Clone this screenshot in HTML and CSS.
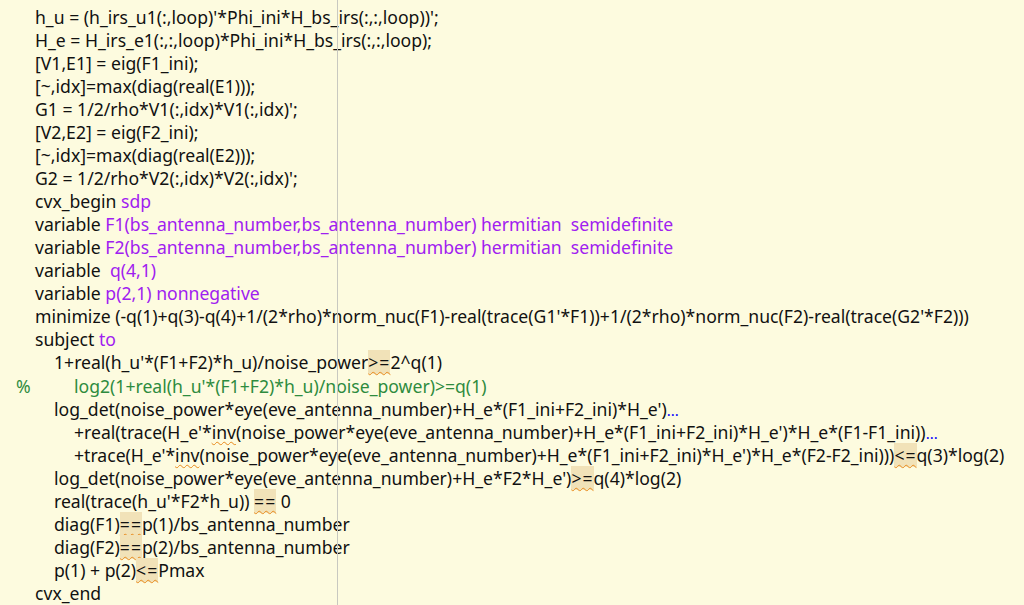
FILE: index.html
```html
<!DOCTYPE html>
<html>
<head>
<meta charset="utf-8">
<link rel="stylesheet" href="styles.css">
</head>
<body>
<div class="editor">
  <div class="margin-line"></div>
  <div class="code">
    <div class="ln">h_u = (h_irs_u1(:,loop)'*Phi_ini*H_bs_irs(:,:,loop))';</div>
    <div class="ln">H_e = H_irs_e1(:,:,loop)*Phi_ini*H_bs_irs(:,:,loop);</div>
    <div class="ln">[V1,E1] = eig(F1_ini);</div>
    <div class="ln">[~,idx]=max(diag(real(E1)));</div>
    <div class="ln">G1 = 1/2/rho*V1(:,idx)*V1(:,idx)';</div>
    <div class="ln">[V2,E2] = eig(F2_ini);</div>
    <div class="ln">[~,idx]=max(diag(real(E2)));</div>
    <div class="ln">G2 = 1/2/rho*V2(:,idx)*V2(:,idx)';</div>
    <div class="ln">cvx_begin <span class="kw">sdp</span></div>
    <div class="ln">variable <span class="kw">F1(bs_antenna_number,bs_antenna_number) hermitian  semidefinite</span></div>
    <div class="ln">variable <span class="kw">F2(bs_antenna_number,bs_antenna_number) hermitian  semidefinite</span></div>
    <div class="ln">variable <span class="kw"> q(4,1)</span></div>
    <div class="ln">variable <span class="kw">p(2,1) nonnegative</span></div>
    <div class="ln">minimize (-q(1)+q(3)-q(4)+1/(2*rho)*norm_nuc(F1)-real(trace(G1'*F1))+1/(2*rho)*norm_nuc(F2)-real(trace(G2'*F2)))</div>
    <div class="ln">subject <span class="kw">to</span></div>
    <div class="ln i1">1+real(h_u'*(F1+F2)*h_u)/noise_power<span class="hl">&gt;=</span>2^q(1)</div>
    <div class="ln cm"><span class="pct">%</span><span class="cmt">log2(1+real(h_u'*(F1+F2)*h_u)/noise_power)&gt;=q(1)</span></div>
    <div class="ln i1">log_det(noise_power*eye(eve_antenna_number)+H_e*(F1_ini+F2_ini)*H_e')<span class="dots">...</span></div>
    <div class="ln i2">+real(trace(H_e'*<span class="sq">inv</span>(noise_power*eye(eve_antenna_number)+H_e*(F1_ini+F2_ini)*H_e')*H_e*(F1-F1_ini))<span class="dots">...</span></div>
    <div class="ln i2">+trace(H_e'*<span class="sq">inv</span>(noise_power*eye(eve_antenna_number)+H_e*(F1_ini+F2_ini)*H_e')*H_e*(F2-F2_ini)))<span class="hl">&lt;=</span>q(3)*log(2)</div>
    <div class="ln i1">log_det(noise_power*eye(eve_antenna_number)+H_e*F2*H_e')<span class="hl">&gt;=</span>q(4)*log(2)</div>
    <div class="ln i1">real(trace(h_u'*F2*h_u)) <span class="hl">==</span> 0</div>
    <div class="ln i1">diag(F1)<span class="hl">==</span>p(1)/bs_antenna_number</div>
    <div class="ln i1">diag(F2)<span class="hl">==</span>p(2)/bs_antenna_number</div>
    <div class="ln i1">p(1) + p(2)<span class="hl">&lt;=</span>Pmax</div>
    <div class="ln">cvx_end</div>
  </div>
</div>
</body>
</html>
```

FILE: styles.css
```css
html, body {
  margin: 0;
  padding: 0;
  background: #fdfbdf;
}
.editor {
  position: relative;
  width: 1024px;
  height: 605px;
  overflow: hidden;
  background: #fdfbdf;
}
.margin-line {
  position: absolute;
  left: 337px;
  top: 0;
  width: 1px;
  height: 605px;
  background: #c8c8c0;
}
.code {
  padding: 6px 0 0 35px;
  font-family: "Noto Sans", "Noto Sans CJK SC", sans-serif;
  font-size: 17.6px;
  color: #111111;
}
.ln {
  height: 23.04px;
  line-height: 23px;
  white-space: pre;
}
.i1 { padding-left: 19px; }
.i2 { padding-left: 39px; }
.cm { margin-left: -19px; display: flex; }
.pct { color: #2e8b3e; width: 58px; }
.cmt { color: #2e8b3e; }
.kw { color: #a020f0; }
.dots { color: #0000ff; font-size: 15px; }
.hl {
  background: #f1e2b8;
  letter-spacing: 1px;
  text-decoration: underline wavy #e8891a;
  text-decoration-thickness: 1px;
  text-underline-offset: 2px;
}
.sq {
  text-decoration: underline wavy #e8891a;
  text-decoration-thickness: 1px;
  text-underline-offset: 2px;
}
```
